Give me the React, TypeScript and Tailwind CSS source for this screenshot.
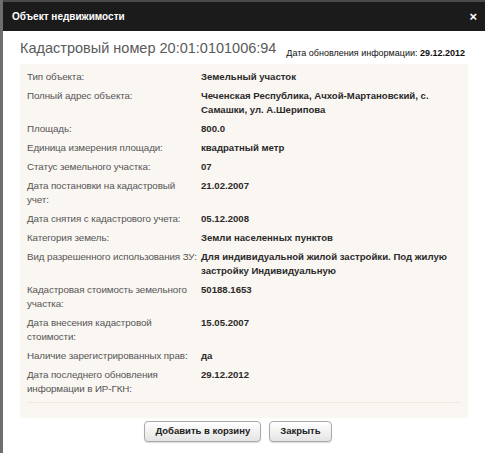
const rows: { label: string; value: string }[] = [
  { label: "Тип объекта:", value: "Земельный участок" },
  {
    label: "Полный адрес объекта:",
    value: "Чеченская Республика, Ачхой-Мартановский, с. Самашки, ул. А.Шерипова",
  },
  { label: "Площадь:", value: "800.0" },
  { label: "Единица измерения площади:", value: "квадратный метр" },
  { label: "Статус земельного участка:", value: "07" },
  { label: "Дата постановки на кадастровый\nучет:", value: "21.02.2007" },
  { label: "Дата снятия с кадастрового учета:", value: "05.12.2008" },
  { label: "Категория земель:", value: "Земли населенных пунктов" },
  {
    label: "Вид разрешенного использования ЗУ:",
    value: "Для индивидуальной жилой застройки. Под жилую застройку Индивидуальную",
  },
  { label: "Кадастровая стоимость земельного\nучастка:", value: "50188.1653" },
  { label: "Дата внесения кадастровой\nстоимости:", value: "15.05.2007" },
  { label: "Наличие зарегистрированных прав:", value: "да" },
  {
    label: "Дата последнего обновления\nинформации в ИР-ГКН:",
    value: "29.12.2012",
  },
];

export default function App() {
  return (
    <div className="w-[485px] h-[453px] bg-white flex flex-col font-['Liberation_Sans',Arial,sans-serif] border-l-[3px] border-[#6e6e6e] overflow-hidden">
      {/* title bar */}
      <div className="h-[31px] shrink-0 bg-[#1b1b1b] border-t-2 border-[#4a4a4a] flex items-center justify-between pl-[9px] pr-[8px]">
        <span className="text-white text-[10px] font-bold">Объект недвижимости</span>
        <span className="text-white text-[13px] font-bold leading-none">×</span>
      </div>

      <div className="flex items-end justify-between pl-[17px] pr-[20px] pt-[10px] pb-[8px] whitespace-nowrap">
        <h1 className="text-[14.5px] text-[#5a5a5a] leading-none">
          Кадастровый номер 20:01:0101006:94
        </h1>
        <p className="text-[9px] text-[#111] leading-none mb-[-2px]">
          Дата обновления информации: <b>29.12.2012</b>
        </p>
      </div>

      <div className="ml-[17px] mr-[17px] bg-[#faf6f2] pt-[6px] px-[7px]">
        <div className="flex flex-col gap-[5px]">
          {rows.map((r) => (
            <div key={r.label} className="flex leading-[14px]">
              <div className="w-[174px] shrink-0 text-[9.8px] tracking-[-0.1px] text-[#555] whitespace-pre-line">
                {r.label}
              </div>
              <div className="w-[250px] text-[9.6px] font-bold text-[#2a2a2a]">{r.value}</div>
            </div>
          ))}
        </div>
        <div className="mt-[6px] border-t border-[#efe9e3] h-[16px]" />
      </div>

      <div className="flex justify-center gap-[8px] pt-[3px] pr-[12px]">
        <button className="h-[21px] px-[10px] rounded-[4px] border border-[#a9a9a9] bg-gradient-to-b from-white to-[#e4e4e4] text-[9.5px] font-bold text-[#222] shadow-[0_1px_1px_rgba(0,0,0,0.15)]">
          Добавить в корзину
        </button>
        <button className="h-[21px] px-[10px] rounded-[4px] border border-[#a9a9a9] bg-gradient-to-b from-white to-[#e4e4e4] text-[9.5px] font-bold text-[#222] shadow-[0_1px_1px_rgba(0,0,0,0.15)]">
          Закрыть
        </button>
      </div>
    </div>
  );
}
